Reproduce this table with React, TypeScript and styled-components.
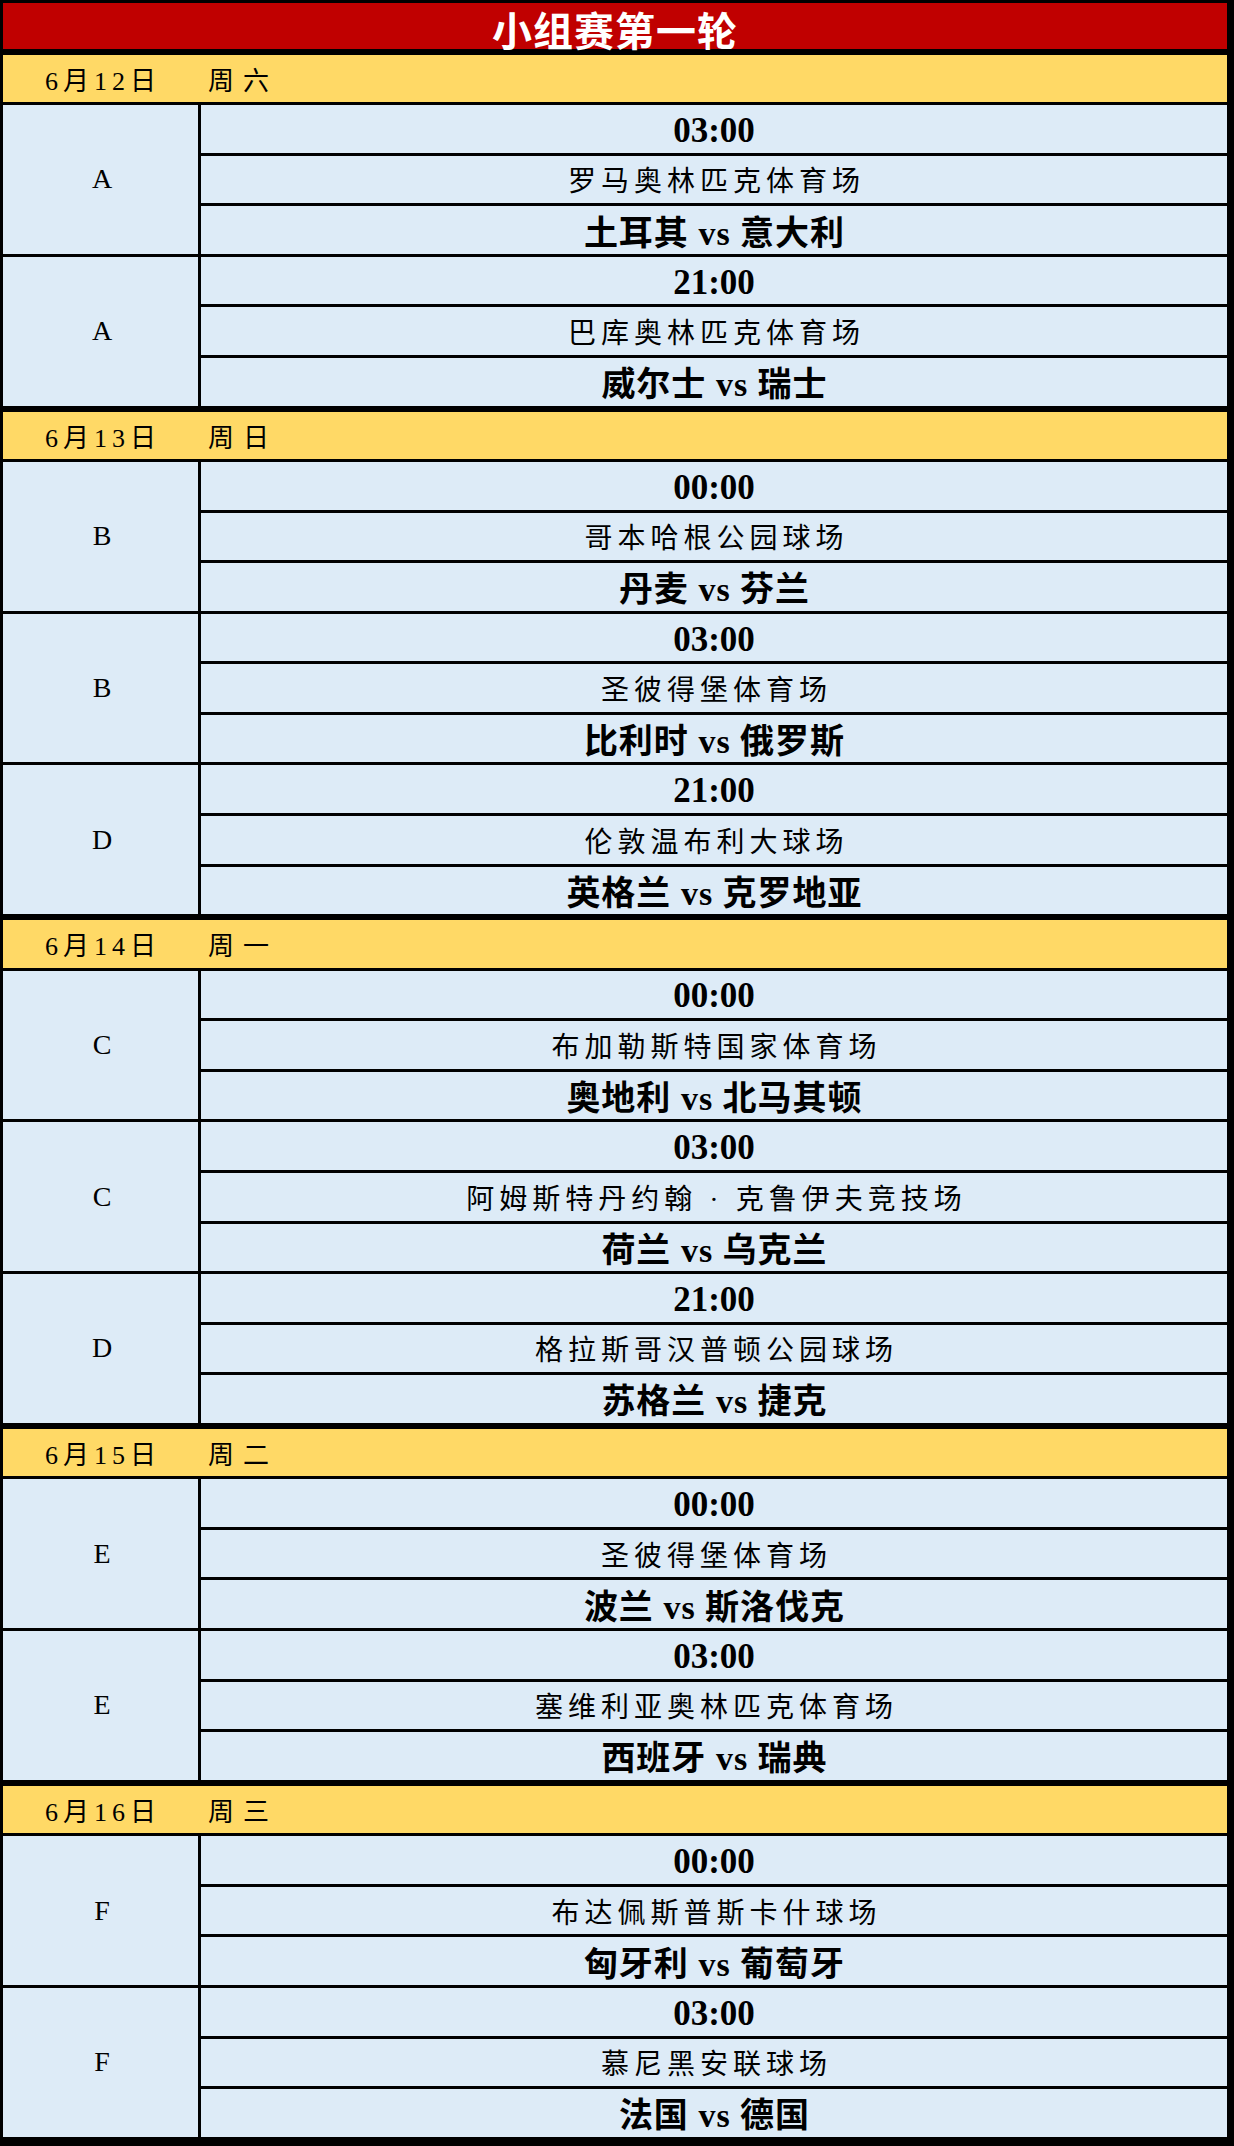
import React from 'react';
import styled, {createGlobalStyle} from 'styled-components';

const ROW = 1998 / 42;
const FONT = '"Liberation Serif", "Noto Sans CJK SC", serif';

type Match = {
    group: string;
    time: string;
    venue: string;
    home: string;
    away: string;
};

type Day = {
    date: string;
    week: string;
    matches: Match[];
};

const DAYS: Day[] = [
    {
        date: '6月12日', week: '周六', matches: [
            {group: 'A', time: '03:00', venue: '罗马奥林匹克体育场', home: '土耳其', away: '意大利'},
            {group: 'A', time: '21:00', venue: '巴库奥林匹克体育场', home: '威尔士', away: '瑞士'},
        ]
    },
    {
        date: '6月13日', week: '周日', matches: [
            {group: 'B', time: '00:00', venue: '哥本哈根公园球场', home: '丹麦', away: '芬兰'},
            {group: 'B', time: '03:00', venue: '圣彼得堡体育场', home: '比利时', away: '俄罗斯'},
            {group: 'D', time: '21:00', venue: '伦敦温布利大球场', home: '英格兰', away: '克罗地亚'},
        ]
    },
    {
        date: '6月14日', week: '周一', matches: [
            {group: 'C', time: '00:00', venue: '布加勒斯特国家体育场', home: '奥地利', away: '北马其顿'},
            {group: 'C', time: '03:00', venue: '阿姆斯特丹约翰 · 克鲁伊夫竞技场', home: '荷兰', away: '乌克兰'},
            {group: 'D', time: '21:00', venue: '格拉斯哥汉普顿公园球场', home: '苏格兰', away: '捷克'},
        ]
    },
    {
        date: '6月15日', week: '周二', matches: [
            {group: 'E', time: '00:00', venue: '圣彼得堡体育场', home: '波兰', away: '斯洛伐克'},
            {group: 'E', time: '03:00', venue: '塞维利亚奥林匹克体育场', home: '西班牙', away: '瑞典'},
        ]
    },
    {
        date: '6月16日', week: '周三', matches: [
            {group: 'F', time: '00:00', venue: '布达佩斯普斯卡什球场', home: '匈牙利', away: '葡萄牙'},
            {group: 'F', time: '03:00', venue: '慕尼黑安联球场', home: '法国', away: '德国'},
        ]
    },
];

const MatchBlock = ({match}: { match: Match }) => (
    <BlockStyle>
        <GroupCell>{match.group}</GroupCell>
        <CellStack>
            <Cell $size={35} $bold $shift={4}>{match.time}</Cell>
            <Cell $size={28} $spacing={5}>{match.venue}</Cell>
            <Cell $size={34} $bold $spacing={1}>{match.home} vs {match.away}</Cell>
        </CellStack>
    </BlockStyle>
);

export default function App() {
    return (
        <>
            <GlobalStyle/>
            <SheetStyle>
                <TitleStyle>小组赛第一轮</TitleStyle>
                {DAYS.map(day => (
                    <DayGroup key={day.date}>
                        <DateRow>
                            <DateText>{day.date}</DateText>
                            <WeekText>{day.week}</WeekText>
                        </DateRow>
                        {day.matches.map((m, i) => (
                            <MatchBlock key={i} match={m}/>
                        ))}
                    </DayGroup>
                ))}
            </SheetStyle>
        </>
    );
}

const GlobalStyle = createGlobalStyle`
  html, body {
    margin: 0;
    padding: 0;
    background: #000;
  }
  * {
    box-sizing: border-box;
  }
`

const SheetStyle = styled.div`
  width: 1234px;
  height: 2146px;
  background: #000;
  padding: 3px 7px 7px 3px;
  display: flex;
  flex-direction: column;
  gap: 6px;
  font-family: ${FONT};
  color: #000;
`

const TitleStyle = styled.div`
  height: ${ROW - 2}px;
  background: #c00000;
  color: #fff;
  font-size: 40px;
  font-weight: 700;
  letter-spacing: 1px;
  display: flex;
  align-items: center;
  justify-content: center;
  padding-top: 6px;
`

const DayGroup = styled.div`
  display: flex;
  flex-direction: column;
  gap: 3px;
`

const DateRow = styled.div`
  height: ${ROW}px;
  background: #ffd966;
  display: grid;
  grid-template-columns: 195px 1fr;
  column-gap: 3px;
  align-items: center;
  font-size: 26px;
`

const DateText = styled.div`
  text-align: center;
  letter-spacing: 5px;
  padding-left: 5px;
`

const WeekText = styled.div`
  padding-left: 7px;
  letter-spacing: 9px;
`

const BlockStyle = styled.div`
  display: grid;
  grid-template-columns: 195px 1fr;
  column-gap: 3px;
`

const GroupCell = styled.div`
  background: #ddebf7;
  display: flex;
  align-items: center;
  justify-content: center;
  font-size: 28px;
  padding-left: 3px;
`

const CellStack = styled.div`
  display: flex;
  flex-direction: column;
  gap: 3px;
`

const Cell = styled.div<{ $size: number; $bold?: boolean; $spacing?: number; $shift?: number }>`
  height: ${ROW}px;
  background: #ddebf7;
  display: flex;
  align-items: center;
  justify-content: center;
  white-space: pre;
  font-size: ${p => p.$size}px;
  font-weight: ${p => (p.$bold ? 700 : 400)};
  letter-spacing: ${p => p.$spacing || 0}px;
  padding-left: ${p => p.$spacing || 0}px;
  padding-top: ${p => p.$shift || 0}px;
`
